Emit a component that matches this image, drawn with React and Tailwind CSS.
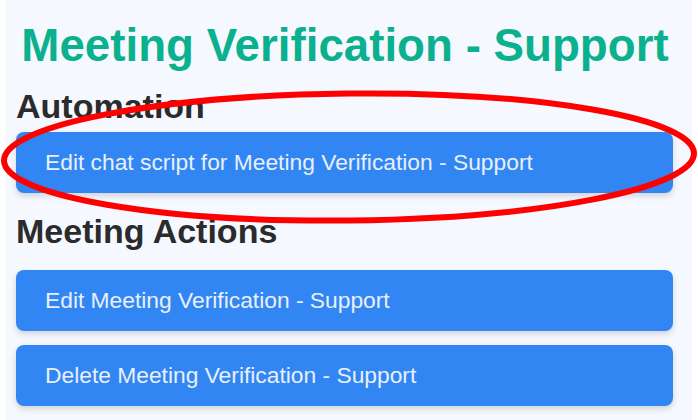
const sections = [
  {
    title: "Automation",
    top: "mt-[14px]",
    gap: "mt-[6px]",
    actions: ["Edit chat script for Meeting Verification - Support"],
  },
  {
    title: "Meeting Actions",
    top: "mt-[18px]",
    gap: "mt-[19px]",
    actions: [
      "Edit Meeting Verification - Support",
      "Delete Meeting Verification - Support",
    ],
  },
];

const ActionButton = ({ label }) => (
  <button className="w-[657px] h-[61px] flex items-center pl-[29px] rounded-lg bg-[#3186f3] text-[#e9effb] text-[22.8px] text-left shadow-[0_3px_6px_rgba(0,0,0,0.15)]">
    {label}
  </button>
);

const App = () => {
  return (
    <div
      className="relative w-[698px] h-[420px] overflow-hidden bg-white"
      style={{ fontFamily: '"Liberation Sans", Arial, sans-serif' }}
    >
      <div className="mx-[6px] h-full bg-[#f5f8fe] px-[10px]">
        <h1 className="pt-[20px] text-center text-[45.7px] leading-[52px] font-bold text-[#0bb08e] pr-[8px] whitespace-nowrap">
          Meeting Verification - Support
        </h1>

        {sections.map((s) => (
          <div key={s.title}>
            <h2
              className={`${s.top} text-[34px] leading-[40px] font-bold text-[#2b2b2b]`}
            >
              {s.title}
            </h2>
            <div className={`${s.gap} flex flex-col gap-[14px]`}>
              {s.actions.map((a) => (
                <ActionButton key={a} label={a} />
              ))}
            </div>
          </div>
        ))}
      </div>

      {/* red highlight ring drawn over the first action */}
      <svg
        className="absolute inset-0 pointer-events-none"
        width="698"
        height="420"
        viewBox="0 0 698 420"
      >
        <ellipse
          cx="349"
          cy="157"
          rx="345"
          ry="63.5"
          fill="none"
          stroke="#ff0000"
          strokeWidth="6"
          transform="rotate(-0.6 349 157)"
        />
      </svg>
    </div>
  );
};

export default App;
